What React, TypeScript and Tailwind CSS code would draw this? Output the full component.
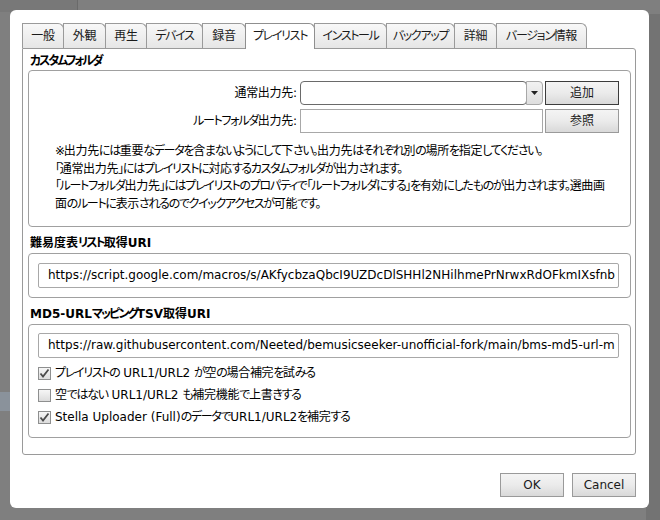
import React from "react";

const FONT = "[font-family:'DejaVu_Sans','Noto_Sans_CJK_JP',sans-serif] [font-feature-settings:'palt']";

// Narrow kana / punctuation runs (Meiryo UI style proportional kana)
function J({ t, bold }: { t: string; bold?: boolean }) {
  const parts = t.split(/([\u3000-\u30ff\uff00-\uffef\u203b]+|[\u4e00-\u9fff]+)/);
  return (
    <>
      {parts.map((p, i) => {
        if (i % 2 === 0) return <React.Fragment key={i}>{p}</React.Fragment>;
        const kanji = /[\u4e00-\u9fff]/.test(p);
        const cls = bold
          ? kanji
            ? ""
            : "tracking-[-2px]"
          : kanji
          ? "tracking-[-0.3px]"
          : "tracking-[-1.3px]";
        return (
          <span key={i} className={cls}>
            {p}
          </span>
        );
      })}
    </>
  );
}

const tabs: [string, number, boolean?][] = [
  ["一般", 42],
  ["外観", 43],
  ["再生", 42],
  ["デバイス", 57],
  ["録音", 44],
  ["プレイリスト", 70, true],
  ["インストール", 73],
  ["バックアップ", 69],
  ["詳細", 43],
  ["バージョン情報", 91],
];

function Check({ checked }: { checked: boolean }) {
  return (
    <div className="w-[13px] h-[13px] shrink-0 border border-[#8e8f8f] bg-gradient-to-b from-[#f6f6f6] to-[#dcdcdc] flex items-center justify-center">
      {checked && (
        <svg width="11" height="11" viewBox="0 0 11 11">
          <path d="M1.5 5.5 L4 8.5 L9.5 1.5" fill="none" stroke="#4a4a4a" strokeWidth="1.8" />
        </svg>
      )}
    </div>
  );
}

function Btn({ children, w, dark }: { children: React.ReactNode; w: string; dark?: boolean }) {
  return (
    <div
      className={`${w} h-[24px] flex items-center justify-center border ${
        dark ? "border-[#3c3c3c]" : "border-[#9a9a9a]"
      } bg-gradient-to-b from-[#f4f4f4] via-[#ebebeb] to-[#d9d9d9] text-[12px] text-[#1a1a1a]`}
    >
      {children}
    </div>
  );
}

export default function App() {
  return (
    <div className={`w-[660px] h-[520px] bg-[#7f7f7f] relative overflow-hidden ${FONT}`}>
      <div className="absolute left-0 top-0 w-[78px] h-[12px] bg-[#787878] border-r border-[#6a6a6a]" />
      <div className="absolute left-0 top-[392px] w-[12px] h-[19px] bg-[#8a929b]" />
      <div className="absolute right-0 top-[14px] w-[14px] h-[506px] bg-[#737373]" />
      <div className="relative ml-[10px] mt-[10px] w-[639px] h-[498px] rounded-[6px] bg-white pl-[12px] pt-[13px] pr-[13px] flex flex-col">
        {/* tabs */}
        <div className="flex items-end h-[25px]">
          {tabs.map(([label, w, sel], i) => (
            <div
              key={label}
              style={{ width: w }}
              className={`${i > 0 ? "-ml-px" : ""} ${
                sel
                  ? "relative z-10 h-[26px] -mb-px bg-white border-[#8f8f8f]"
                  : "h-[25px] bg-gradient-to-b from-[#f8f8f8] to-[#e6e6e6] border-[#9a9a9a]"
              } border border-b-0 rounded-tr-[6px] flex items-center justify-center text-[12px] text-[#1a1a1a] whitespace-nowrap`}
            >
              <span className={sel ? "-mt-[1px]" : ""}>
                <J t={label} />
              </span>
            </div>
          ))}
        </div>
        {/* panel */}
        <div className="w-[614px] h-[407px] border border-[#9a9a9a] rounded-b-[3px] rounded-tr-[3px] px-[5px] pr-[4px]">
          <div className="pt-[3px] leading-[18px] h-[21px] text-[12px] font-bold text-black pl-[2px]">
            <J t="カスタムフォルダ" bold />
          </div>
          <div className="h-[157px] border border-[#a0a0a0] rounded-[4px] pt-[10px]">
            <div className="flex items-center h-[24px]">
              <div className="w-[268px] text-right text-[12px] text-black">
                <J t="通常出力先:" />
              </div>
              <div className="ml-[3px] flex h-[24px]">
                <div className="w-[227px] h-[24px] rounded-[4px] border border-[#6a6a6a] bg-white" />
                <div className="w-[17px] h-[24px] rounded-r-[4px] border border-[#a8a8a8] bg-gradient-to-b from-[#f2f2f2] to-[#dedede] flex items-center justify-center -ml-px">
                  <svg width="7" height="4" viewBox="0 0 7 4">
                    <path d="M0 0 H7 L3.5 4 Z" fill="#222" />
                  </svg>
                </div>
              </div>
              <div className="ml-[2px]">
                <Btn w="w-[74px]" dark>
                  追加
                </Btn>
              </div>
            </div>
            <div className="flex items-center h-[24px] mt-[4px]">
              <div className="w-[268px] text-right text-[12px] text-black">
                <J t="ルートフォルダ出力先:" />
              </div>
              <div className="ml-[3px] w-[243px] h-[24px] border border-[#a8a8a8] bg-white" />
              <div className="ml-[2px]">
                <Btn w="w-[74px]">参照</Btn>
              </div>
            </div>
            <div className="mt-[10px] pl-[26px] text-[12px] leading-[17.5px] text-black whitespace-nowrap">
              <div>
                <J t="※出力先には重要なデータを含まないようにして下さい。出力先はそれぞれ別の場所を指定してください。" />
              </div>
              <div>
                <J t="「通常出力先」にはプレイリストに対応するカスタムフォルダが出力されます。" />
              </div>
              <div>
                <J t="「ルートフォルダ出力先」にはプレイリストのプロパティで「ルートフォルダにする」を有効にしたものが出力されます。選曲画" />
              </div>
              <div>
                <J t="面のルートに表示されるのでクイックアクセスが可能です。" />
              </div>
            </div>
          </div>
          <div className="pt-[7px] leading-[18px] h-[26px] text-[12px] font-bold text-black pl-[2px]">
            <J t="難易度表リスト取得URI" bold />
          </div>
          <div className="h-[45px] border border-[#a0a0a0] rounded-[4px] pt-[9px] pl-[9px] pr-[11px]">
            <div className="h-[25px] border border-[#a8a8a8] rounded-[2px] bg-white overflow-hidden whitespace-nowrap text-[12px] leading-[23px] pl-[9px] text-black">
              https://script.google.com/macros/s/AKfycbzaQbcI9UZDcDlSHHl2NHilhmePrNrwxRdOFkmIXsfnb
            </div>
          </div>
          <div className="pt-[7px] leading-[18px] h-[26px] text-[12px] font-bold text-black pl-[2px]">
            <J t="MD5-URLマッピングTSV取得URI" bold />
          </div>
          <div className="h-[114px] border border-[#a0a0a0] rounded-[4px] pt-[8px] pl-[9px] pr-[11px]">
            <div className="h-[25px] border border-[#a8a8a8] rounded-[2px] bg-white overflow-hidden whitespace-nowrap text-[12px] leading-[23px] pl-[9px] text-black">
              https://raw.githubusercontent.com/Neeted/bemusicseeker-unofficial-fork/main/bms-md5-url-m
            </div>
            <div className="mt-[4px] flex flex-col">
              {[
                ["プレイリストの URL1/URL2 が空の場合補完を試みる", true],
                ["空ではない URL1/URL2 も補完機能で上書きする", false],
                ["Stella Uploader (Full)のデータでURL1/URL2を補完する", true],
              ].map(([t, c]) => (
                <div key={t as string} className="h-[22px] flex items-center gap-[4px] text-[12px] text-black whitespace-nowrap">
                  <Check checked={c as boolean} />
                  <span>
                    <J t={t as string} />
                  </span>
                </div>
              ))}
            </div>
          </div>
        </div>
        <div className="flex justify-end gap-[8px] mt-[18px]">
          <Btn w="w-[64px]">OK</Btn>
          <Btn w="w-[64px]">Cancel</Btn>
        </div>
      </div>
    </div>
  );
}
